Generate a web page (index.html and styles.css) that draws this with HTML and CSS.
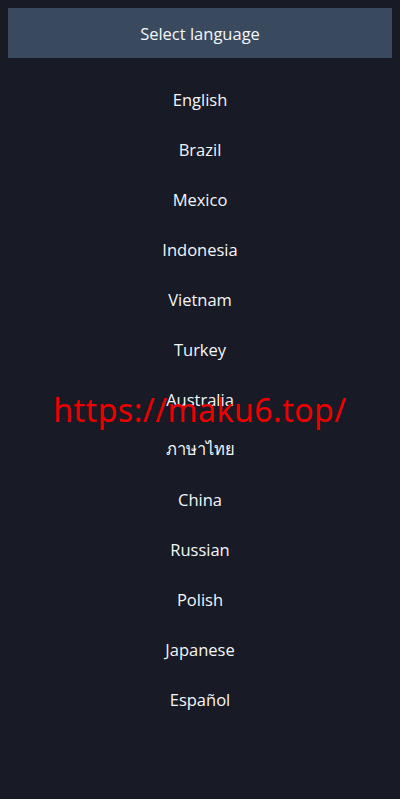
FILE: index.html
```html
<!DOCTYPE html>
<html>
<head>
<meta charset="utf-8">
<link rel="stylesheet" href="styles.css">
</head>
<body>
<div class="page">
  <div class="header">Select language</div>
  <ul class="list">
    <li>English</li>
    <li>Brazil</li>
    <li>Mexico</li>
    <li>Indonesia</li>
    <li>Vietnam</li>
    <li>Turkey</li>
    <li>Australia</li>
    <li>ภาษาไทย</li>
    <li>China</li>
    <li>Russian</li>
    <li>Polish</li>
    <li>Japanese</li>
    <li>Español</li>
  </ul>
  <div class="watermark">https://maku6.top/</div>
</div>
</body>
</html>
```
FILE: styles.css
```css
html, body {
  margin: 0;
  padding: 0;
  background: #181a25;
}
body {
  font-family: "Open Sans", "Noto Sans", sans-serif;
  color: #f4f6f8;
}
.page {
  position: relative;
  padding: 8px;
  height: 799px;
  box-sizing: border-box;
}
.header {
  background: #3a4a5e;
  height: 50px;
  display: flex;
  align-items: center;
  justify-content: center;
  font-size: 16.5px;
}
.list {
  list-style: none;
  margin: 16px 0 0;
  padding: 0;
}
.list li {
  height: 50px;
  display: flex;
  align-items: center;
  justify-content: center;
  font-size: 16.5px;
}
.watermark {
  position: absolute;
  left: 0;
  right: 0;
  top: 388px;
  text-align: center;
  color: #ee0000;
  font-family: "Noto Sans", "DejaVu Sans", sans-serif;
  font-size: 32px;
  line-height: 44px;
  letter-spacing: 0.5px;
}
```
